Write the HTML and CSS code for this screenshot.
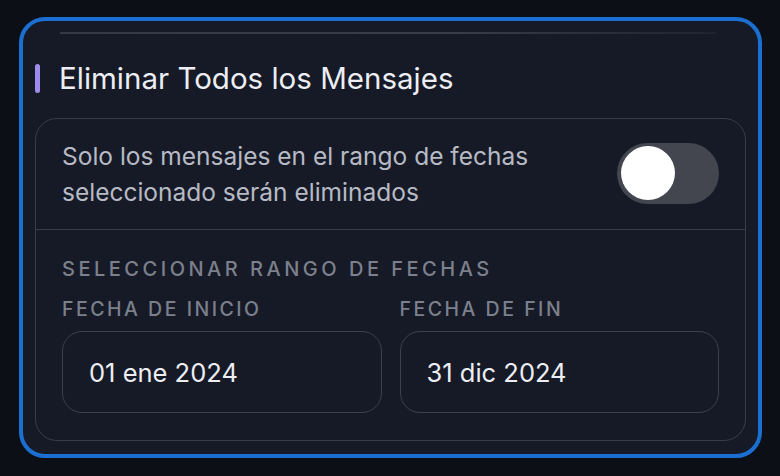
FILE: index.html
```html
<!DOCTYPE html>
<html lang="es">
<head>
<meta charset="utf-8">
<link rel="stylesheet" href="styles.css">
</head>
<body>
<div class="frame">
  <div class="top-rule"></div>
  <div class="title-row">
    <span class="accent"></span>
    <h2 class="title">Eliminar Todos los Mensajes</h2>
  </div>
  <div class="panel">
    <div class="toggle-row">
      <p class="desc">Solo los mensajes en el rango de fechas seleccionado serán eliminados</p>
      <div class="switch"><span class="knob"></span></div>
    </div>
    <div class="range">
      <div class="section-label">Seleccionar rango de fechas</div>
      <div class="fields">
        <div class="field">
          <div class="field-label">Fecha de inicio</div>
          <div class="input">01 ene 2024</div>
        </div>
        <div class="field">
          <div class="field-label">Fecha de fin</div>
          <div class="input">31 dic 2024</div>
        </div>
      </div>
    </div>
  </div>
</div>
</body>
</html>
```
FILE: styles.css
```css
html, body {
  margin: 0;
  padding: 0;
  background: #0d0f16;
  font-family: Inter, "Noto Sans", sans-serif;
}
.frame {
  box-sizing: border-box;
  margin: 17px 0 0 19px;
  width: 743px;
  height: 441px;
  border: 4px solid #1b6fd1;
  border-radius: 26px;
  background: #161a26;
  padding: 11px 12px 0 12px;
}
.top-rule {
  height: 2px;
  margin: 0 30px 0 25px;
  background: linear-gradient(90deg, #363943 0%, #3a3d47 60%, #1f2230 100%);
}
.title-row {
  display: flex;
  align-items: center;
  gap: 19px;
  height: 58px;
  margin-top: 15px;
}
.accent {
  width: 5px;
  height: 29px;
  border-radius: 3px;
  background: #9d8cec;
}
.title {
  margin: 0;
  font-size: 29.5px;
  font-weight: 400;
  color: #eceef3;
}
.panel {
  margin-top: 11px;
  border: 1.5px solid #3a3d48;
  border-radius: 22px;
  height: 323px;
  box-sizing: border-box;
}
.toggle-row {
  display: flex;
  align-items: center;
  justify-content: space-between;
  height: 110px;
  padding: 0 26px;
  border-bottom: 1.5px solid #3a3d48;
}
.desc {
  margin: 0;
  width: 500px;
  font-size: 24.5px;
  line-height: 36px;
  color: #b7bac5;
}
.switch {
  width: 102px;
  height: 61px;
  border-radius: 31px;
  background: #44464f;
  display: flex;
  align-items: center;
  padding-left: 4px;
  box-sizing: border-box;
  margin-top: -2px;
}
.knob {
  width: 54px;
  height: 54px;
  border-radius: 50%;
  background: #ffffff;
}
.range {
  padding: 27px 26px 0 26px;
}
.section-label {
  font-size: 20px;
  font-weight: 500;
  letter-spacing: 3.5px;
  text-transform: uppercase;
  color: #7c808d;
  line-height: 24px;
}
.fields {
  display: flex;
  gap: 18px;
  margin-top: 16px;
}
.field {
  flex: 1;
}
.field-label {
  font-size: 19.5px;
  font-weight: 500;
  letter-spacing: 2.5px;
  text-transform: uppercase;
  color: #7c808d;
  line-height: 24px;
}
.input {
  margin-top: 10px;
  height: 82px;
  box-sizing: border-box;
  border: 1.5px solid #3d404b;
  border-radius: 20px;
  display: flex;
  align-items: center;
  padding-left: 26px;
  font-size: 25.5px;
  color: #eceef3;
}
```
